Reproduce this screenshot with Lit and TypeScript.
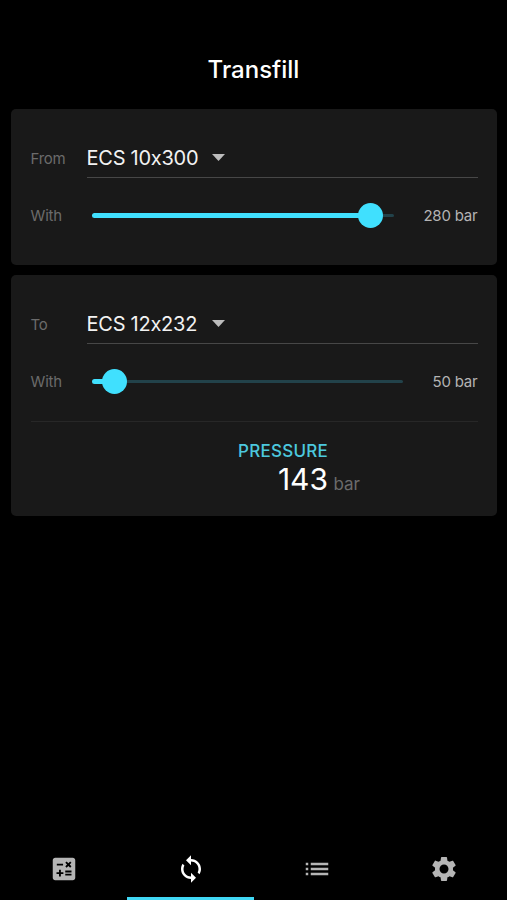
import { LitElement, html, css, svg } from "lit";
import { customElement, property } from "lit/decorators.js";

@customElement("tank-select")
class TankSelect extends LitElement {
  @property() label = "";
  @property() value = "";

  static styles = css`
    :host { display: flex; height: 40px; }
    .label { width: 56px; flex: none; font-size: 15px; letter-spacing: -0.25px; line-height: 41px; color: #6b6b6b; }
    .field { flex: 1; display: flex; align-items: center; box-sizing: border-box; border-bottom: 1.5px solid #474747; }
    .value { width: 125.5px; font-size: 20px; letter-spacing: -0.25px; line-height: 38px; padding-top: 2px; color: #f2f2f2; white-space: nowrap; }
    .caret { width: 13px; height: 7px; margin-top: 1px; background: #bcbcbc; clip-path: polygon(0 0, 100% 0, 50% 100%); }
  `;

  render() {
    return html`
      <span class="label">${this.label}</span>
      <div class="field"><span class="value">${this.value}</span><span class="caret"></span></div>
    `;
  }
}

@customElement("pressure-slider")
class PressureSlider extends LitElement {
  @property({ type: Number }) value = 0;
  @property({ type: Number }) max = 300;

  static styles = css`
    :host { display: flex; align-items: center; height: 40px; }
    .label { width: 61px; flex: none; font-size: 15px; letter-spacing: -0.15px; color: #6b6b6b; }
    .track { flex: 1; height: 25px; display: flex; align-items: center; }
    .active { height: 5px; border-radius: 3px 0 0 3px; background: #40e0fe; }
    .thumb { width: 25px; height: 25px; flex: none; border-radius: 50%; background: #40e0fe; margin: 0 -12.5px; z-index: 1; }
    .rest { flex: 1; height: 3px; border-radius: 0 2px 2px 0; background: #22424a; }
    .value { margin-left: 29.5px; font-size: 15px; letter-spacing: -0.2px; color: #b4b4b4; white-space: nowrap; }
  `;

  render() {
    return html`
      <span class="label">With</span>
      <div class="track">
        <div class="active" style="width:${(this.value / this.max) * 100}%"></div>
        <div class="thumb"></div>
        <div class="rest"></div>
      </div>
      <span class="value">${this.value} bar</span>
    `;
  }
}

const icons = [
  svg`<path fill-rule="evenodd" d="M19 3H5c-1.100 0-2 .9-2 2v14c0 1.100.9 2 2 2h14c1.100 0 2-.9 2-2V5c0-1.100-.9-2-2-2zm-5.970 4.060L14.090 6l1.410 1.410L16.910 6l1.060 1.060-1.410 1.410 1.410 1.410-1.060 1.060-1.410-1.400-1.410 1.410-1.060-1.060 1.410-1.410-1.410-1.420zm-6.780.66h5v1.500h-5v-1.500zM11.500 16h-2v2H8v-2H6v-1.500h2v-2h1.500v2h2V16zm6.500 1.250h-5v-1.500h5v1.500zm0-2.500h-5v-1.500h5v1.500z"/>`,
  svg`<path d="M12 4V1L8 5l4 4V6c3.310 0 6 2.690 6 6 0 1.010-.25 1.970-.7 2.800l1.460 1.460C19.540 15.030 20 13.570 20 12c0-4.420-3.580-8-8-8zm0 14c-3.310 0-6-2.690-6-6 0-1.010.25-1.970.7-2.800L5.240 7.740C4.460 8.970 4 10.430 4 12c0 4.420 3.580 8 8 8v3l4-4-4-4v3z"/>`,
  svg`<path d="M3 13h2v-2H3v2zm0 4h2v-2H3v2zm0-8h2V7H3v2zm4 4h14v-2H7v2zm0 4h14v-2H7v2zM7 7v2h14V7H7z"/>`,
  svg`<path d="M19.140 12.940c.04-.3.06-.61.06-.94 0-.32-.02-.64-.07-.94l2.030-1.580c.18-.14.23-.41.12-.61l-1.920-3.320c-.12-.22-.37-.29-.59-.22l-2.390.96c-.5-.38-1.030-.7-1.620-.94l-.36-2.540c-.04-.24-.24-.41-.48-.41h-3.840c-.24 0-.43.17-.47.41l-.36 2.540c-.59.24-1.130.57-1.620.94l-2.390-.96c-.22-.08-.47 0-.59.22L2.740 8.870c-.12.21-.08.47.12.61l2.030 1.580c-.05.3-.09.63-.09.94s.02.64.07.94l-2.030 1.580c-.18.14-.23.41-.12.61l1.920 3.320c.12.22.37.29.59.22l2.390-.96c.5.38 1.030.7 1.620.94l.36 2.540c.05.24.24.41.48.41h3.840c.24 0 .44-.17.47-.41l.36-2.540c.59-.24 1.130-.56 1.620-.94l2.390.96c.22.08.47 0 .59-.22l1.920-3.320c.12-.22.07-.47-.12-.61l-2.010-1.580zM12 15.600c-1.980 0-3.600-1.620-3.600-3.600s1.620-3.600 3.600-3.600 3.600 1.620 3.600 3.600-1.620 3.600-3.600 3.600z"/>`,
];

@customElement("app-root")
class AppRoot extends LitElement {
  static styles = css`
    :host {
      display: flex; flex-direction: column; height: 900px; box-sizing: border-box;
      background: #000; color: #fff; font-family: Inter, "Liberation Sans", sans-serif;
      font-feature-settings: "calt" 0;
    }
    h1 { margin: 0; padding: 49px 0 19px; font-size: 24px; font-weight: 500; line-height: 41px; text-align: center; }
    .cards { flex: 1; display: flex; flex-direction: column; gap: 10px; padding: 0 10px 0 11px; }
    .card { background: #191919; border-radius: 5px; box-sizing: border-box; padding: 28.500px 19.500px 0; }
    .from { height: 155.500px; }
    .to { height: 241.500px; padding-top: 29px; }
    pressure-slider { margin-top: 18.400px; }
    .result { margin-top: 19.200px; border-top: 1px solid #272727; padding-top: 19px; display: grid; grid-template-columns: 297.500px 1fr; }
    .title { justify-self: end; font-size: 17px; letter-spacing: 0.25px; line-height: 20px; font-weight: 500; color: #4cc8de; }
    .amount { grid-row: 2; justify-self: end; align-self: baseline; font-size: 30px; line-height: 37px; }
    .unit { grid-row: 2; grid-column: 2; align-self: baseline; margin-left: 5.500px; font-size: 17px; color: #6b6b6b; }
    nav { display: grid; grid-template-columns: repeat(4, 1fr); height: 62px; }
    .tab { display: flex; align-items: center; justify-content: center; box-sizing: border-box; border-bottom: 3px solid transparent; padding: 3.500px 0 0 1px; color: #b5b5b5; }
    .tab.on { color: #fff; border-color: #40d8f5; }
    .tab svg { width: 30px; height: 30px; fill: currentColor; }
  `;

  render() {
    return html`
      <h1>Transfill</h1>
      <div class="cards">
        <section class="card from">
          <tank-select label="From" value="ECS 10x300"></tank-select>
          <pressure-slider value="280" max="303"></pressure-slider>
        </section>
        <section class="card to">
          <tank-select label="To" value="ECS 12x232"></tank-select>
          <pressure-slider value="50" max="683"></pressure-slider>
          <div class="result">
            <span class="title">PRESSURE</span>
            <span class="amount">143</span><span class="unit">bar</span>
          </div>
        </section>
      </div>
      <nav>
        ${icons.map((icon, i) => html`<div class="tab ${i === 1 ? "on" : ""}"><svg viewBox="0 0 24 24">${icon}</svg></div>`)}
      </nav>
    `;
  }
}
